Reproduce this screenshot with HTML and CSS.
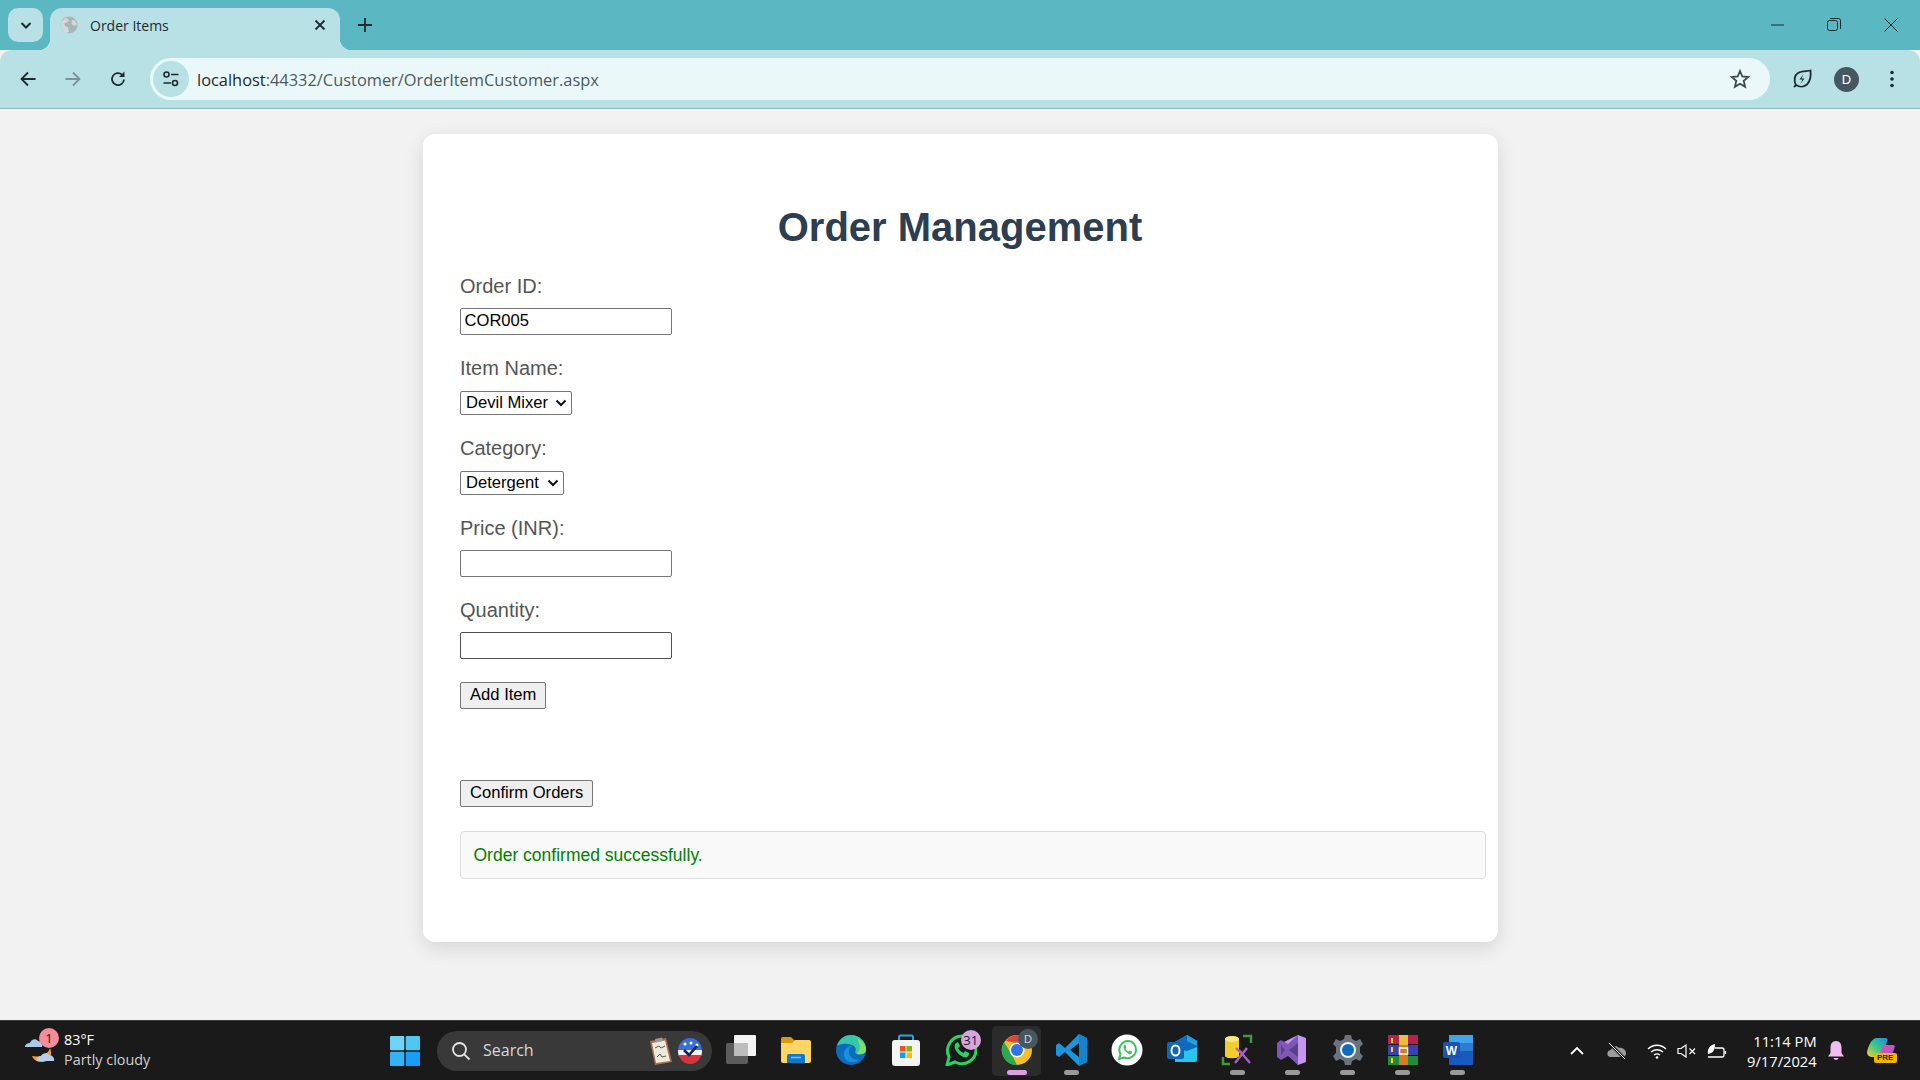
FILE: index.html
```html
<!DOCTYPE html>
<html lang="en">

<head>
    <meta charset="UTF-8">
    <title>Order Items</title>
    <link rel="stylesheet" href="styles.css">
</head>

<body>
    <div class="tabstrip">
        <div class="tab-search">
            <svg width="16" height="16" viewBox="0 0 16 16"><path d="M3.5 6 8 10.5 12.5 6" fill="none" stroke="#1f2a2c" stroke-width="2"/></svg>
        </div>
        <div class="tab">
            <svg class="favicon" width="18" height="18" viewBox="0 0 18 18"><circle cx="9" cy="9" r="8.5" fill="#a9b4b7"/><path d="M6 1.5 9 4 7.5 6.5 4.5 7 5 10l3 1 1 5-3 1C2 15 0 11 1 6ZM12 4l3 .5 2 4-3 1.500-2.500-2Z" fill="#cfd9dc"/></svg>
            <span class="tab-title">Order Items</span>
            <svg class="tab-close" width="12" height="12" viewBox="0 0 12 12"><path d="M1.500 1.500 10.500 10.500M10.500 1.500 1.500 10.500" stroke="#1f2a2c" stroke-width="1.800"/></svg>
        </div>
        <svg class="new-tab" width="14" height="14" viewBox="0 0 14 14"><path d="M7 0V14M0 7H14" stroke="#1f2a2c" stroke-width="1.800"/></svg>
        <div class="window-controls">
            <svg width="14" height="14" viewBox="0 0 14 14"><path d="M1 7H14" stroke="#1c2b2d" stroke-width="1"/></svg>
            <svg width="14" height="14" viewBox="0 0 14 14"><rect x="0.500" y="2.500" width="10" height="10" rx="2" fill="none" stroke="#1c2b2d"/><path d="M3 .5H11.500A2 2 0 0 1 13.500 2.500V11" fill="none" stroke="#1c2b2d"/></svg>
            <svg width="14" height="14" viewBox="0 0 14 14"><path d="M.5.5 13.500 13.500M13.500.5.5 13.500" stroke="#1c2b2d" stroke-width="1"/></svg>
        </div>
    </div>

    <div class="toolbar">
        <svg class="nav-btn" width="18" height="18" viewBox="0 0 18 18"><path d="M16.500 9H2.500M9 2.500 2.500 9 9 15.500" fill="none" stroke="#1f2a2c" stroke-width="1.800"/></svg>
        <svg class="nav-btn" width="18" height="18" viewBox="0 0 18 18"><path d="M1.500 9H15.500M9 2.500 15.500 9 9 15.500" fill="none" stroke="#7d9296" stroke-width="1.800"/></svg>
        <svg class="nav-btn" width="18" height="18" viewBox="0 0 18 18"><path d="M15 9.500A6 6 0 1 1 13 4.600" fill="none" stroke="#1f2a2c" stroke-width="1.800"/><path d="M15.500 1.500V7H10Z" fill="#1f2a2c"/></svg>
        <div class="omnibox">
            <div class="site-info">
                <svg width="18" height="18" viewBox="0 0 18 18"><circle cx="4.500" cy="4.500" r="2.500" fill="none" stroke="#1f2a2c" stroke-width="1.600"/><path d="M9 4.500H16.500M1.500 13H9" stroke="#1f2a2c" stroke-width="1.600"/><circle cx="13" cy="13" r="2.500" fill="none" stroke="#1f2a2c" stroke-width="1.600"/></svg>
            </div>
            <div class="url"><span class="host">localhost</span>:44332/Customer/OrderItemCustomer.aspx</div>
            <svg class="star" width="20" height="20" viewBox="0 0 20 20"><path d="M10 2 12.300 7.500 18.300 8 13.700 11.900 15.100 17.800 10 14.700 4.900 17.800 6.300 11.900 1.700 8 7.700 7.500Z" fill="none" stroke="#3c4a4d" stroke-width="1.800"/></svg>
        </div>
        <svg class="leaf" width="22" height="20" viewBox="0 0 20 20"><path d="M2 18 4 16C1.500 12 2.500 6 6 4 10 1.500 15 2.500 18.500 1.500 19 6 18.500 12 15 15.500 11.500 18.500 7 18 4 16" fill="none" stroke="#1f2a2c" stroke-width="1.800"/><path d="M11.500 5 7.500 10.500H10.500L8.500 15 12.500 9.500H9.500Z" fill="#1f2a2c"/></svg>
        <div class="avatar">D</div>
        <svg class="menu" width="4" height="18" viewBox="0 0 4 18"><circle cx="2" cy="2.500" r="1.800" fill="#1f2a2c"/><circle cx="2" cy="9" r="1.800" fill="#1f2a2c"/><circle cx="2" cy="15.500" r="1.800" fill="#1f2a2c"/></svg>
    </div>

    <main class="page">
        <div class="card">
            <h1>Order Management</h1>
            <div class="field">
                <label>Order ID:</label>
                <input class="text-input" type="text" value="COR005">
            </div>
            <div class="field">
                <label>Item Name:</label>
                <select class="drop drop-item"><option>Devil Mixer</option></select>
            </div>
            <div class="field">
                <label>Category:</label>
                <select class="drop drop-category"><option>Detergent</option></select>
            </div>
            <div class="field">
                <label>Price (INR):</label>
                <input class="text-input" type="text">
            </div>
            <div class="field">
                <label>Quantity:</label>
                <input class="text-input hovered" type="text">
            </div>
            <button class="btn btn-add">Add Item</button>
            <button class="btn btn-confirm">Confirm Orders</button>
            <div class="status">Order confirmed successfully.</div>
        </div>
    </main>

    <div class="taskbar">
        <div class="weather">
            <svg width="32" height="34" viewBox="0 0 32 34"><path d="M8 22C10 28 19 30 24 26 27 23 28 19 26 14 25 19 18 24 8 22Z" fill="#f0a030"/><path d="M1 13C1 10 4 9 6 9 7 5 12 4 14 7 17 7 19 10 18 13Z" fill="#a9c9ee"/><path d="M13 27C12 24 15 22 17 22 18 19 23 18 25 21 28 21 31 24 30 27Z" fill="#b3d0f2"/></svg>
            <span class="weather-badge">1</span>
            <div class="weather-text">
                <div class="temp">83°F</div>
                <div class="sky">Partly cloudy</div>
            </div>
        </div>

        <div class="start">
            <svg width="30" height="30" viewBox="0 0 30 30"><rect x="0" y="0" width="14.300" height="14.300" rx="1" fill="#6fd3f5"/><rect x="15.700" y="0" width="14.300" height="14.300" rx="1" fill="#52c6f3"/><rect x="0" y="15.700" width="14.300" height="14.300" rx="1" fill="#35b2f5"/><rect x="15.700" y="15.700" width="14.300" height="14.300" rx="1" fill="#1a9df5"/></svg>
        </div>

        <div class="search">
            <svg width="20" height="20" viewBox="0 0 20 20"><circle cx="8.500" cy="8.500" r="6.500" fill="none" stroke="#e6e6e6" stroke-width="1.800"/><path d="M13.300 13.300 18.500 18.500" stroke="#e6e6e6" stroke-width="1.800"/></svg>
            <span class="search-text">Search</span>
            <svg class="search-art" width="26" height="30" viewBox="0 0 26 30"><path d="M3 5 19 2 25 26 8 29Z" fill="#a9704f"/><path d="M5 7 18 4.500 23 25 9 27Z" fill="#efe9dc"/><path d="M8 3 15 1.500 16 5 9 6.500Z" fill="#9a9a9a"/><path d="M8 12 12 10 14 12 18 10M10 21 13 18 15 21 19 20" fill="none" stroke="#555" stroke-width="1"/></svg>
            <svg class="search-art search-vote" width="26" height="26" viewBox="0 0 26 26"><defs><clipPath id="vote"><ellipse cx="13" cy="13" rx="12" ry="13"/></clipPath></defs><g clip-path="url(#vote)"><rect width="26" height="12" fill="#3b6fd8"/><rect y="12" width="26" height="6" fill="#f2f2f2"/><rect y="17" width="26" height="9" fill="#d8343e"/><circle cx="8" cy="6" r="1.500" fill="#fff"/><circle cx="14" cy="5" r="1.500" fill="#fff"/><circle cx="20" cy="7" r="1.500" fill="#fff"/></g><path d="M7 12 12 17 20 8" fill="none" stroke="#1b2550" stroke-width="2.600"/></svg>
        </div>

        <div class="apps">
            <div class="app">
                <svg width="32" height="32" viewBox="0 0 32 32"><rect x="1" y="9" width="22" height="21" rx="2" fill="#5c5c5c"/><rect x="9" y="1" width="22" height="21" rx="1" fill="#f4f4f4"/><rect x="9" y="9" width="14" height="13" fill="#bdbdbd"/></svg>
            </div>
            <div class="app">
                <svg width="32" height="32" viewBox="0 0 32 32"><path d="M1 5A2 2 0 0 1 3 3H11L15 7V28H3A2 2 0 0 1 1 26Z" fill="#d99a10"/><path d="M1 9 12 9 15 6H29A2 2 0 0 1 31 8V27A2 2 0 0 1 29 29H3A2 2 0 0 1 1 27Z" fill="#fdd564"/><path d="M7 22A2 2 0 0 1 9 20H23A2 2 0 0 1 25 22V29H7Z" fill="#0f78c8"/><path d="M11 23.500H21" stroke="#7cc4f2" stroke-width="1.500"/></svg>
            </div>
            <div class="app">
                <svg width="32" height="32" viewBox="0 0 32 32"><circle cx="16" cy="16" r="15" fill="#0c6bbd"/><path d="M2 12C4 4 11 1 16 1 25 1 31 8 31 15 31 20 26 21 22 20 18 19 23 15 19 12 14 9 6 9 2 12Z" fill="#37c6a8"/><path d="M22 4C28 7 31 11 31 15 31 20 26 21 22 20 24 17 27 14 22 4Z" fill="#7ce06a"/><path d="M24 26C19 30 11 29 9 22 8 17 12 12 17 12 13 15 13 20 16 23 18 25 21 26 24 26Z" fill="#1891dd"/></svg>
            </div>
            <div class="app">
                <svg width="32" height="32" viewBox="0 0 32 32"><path d="M9 7V3A1.500 1.500 0 0 1 10.500 1.500H21.500A1.500 1.500 0 0 1 23 3V7" fill="none" stroke="#2aa3df" stroke-width="2"/><rect x="2" y="6" width="28" height="26" rx="3" fill="#f3f3f3"/><rect x="10" y="12" width="5.500" height="5.500" fill="#f25022"/><rect x="16.500" y="12" width="5.500" height="5.500" fill="#7fba00"/><rect x="10" y="18.500" width="5.500" height="5.500" fill="#00a4ef"/><rect x="16.500" y="18.500" width="5.500" height="5.500" fill="#ffb900"/></svg>
            </div>
            <div class="app">
                <svg width="32" height="32" viewBox="0 0 32 32"><path d="M2 31 4 23C-1 13 7 2 17 2 26 2 31 9 31 16 31 26 20 33 10 28Z" fill="none" stroke="#25d366" stroke-width="3"/><path d="M11 9C9 11 9 14 12 18 15 22 19 24 22 23 24 22 24 20 24 19L20 17 18.500 19C16 18 14 16 13 14L15 12 13 8Z" fill="#25d366"/></svg>
                <span class="app-badge">31</span>
            </div>
            <div class="app app-active">
                <svg width="32" height="32" viewBox="0 0 32 32"><circle cx="16" cy="16" r="15" fill="#f6bf26"/><path d="M16 1A15 15 0 0 1 29 8.500L16 9 5 7A15 15 0 0 1 16 1Z" fill="#dc4437"/><path d="M3 8 10 19 16 31A15 15 0 0 1 3 8Z" fill="#2fa853"/><circle cx="16" cy="16" r="7.500" fill="#fff"/><circle cx="16" cy="16" r="6" fill="#2f74e8"/></svg>
                <span class="chrome-badge">D</span>
                <span class="pill"></span>
            </div>
            <div class="app">
                <svg width="32" height="32" viewBox="0 0 32 32"><path d="M23 0 31 4V28L23 32 9 18 3 23 0 21V11L3 9 9 14ZM23 9 14 16 23 23Z" fill="#1c95dd"/><path d="M23 0 31 4V28L23 32Z" fill="#0e7dc7" opacity="0.700"/></svg>
                <span class="dot"></span>
            </div>
            <div class="app">
                <svg width="32" height="32" viewBox="0 0 32 32"><circle cx="16" cy="16" r="15.500" fill="#fff"/><path d="M8 25 9.500 20C6 14 11 7 17 7 22 7 25 11 25 16 25 22 18 26 13 23.500Z" fill="none" stroke="#3cc45c" stroke-width="2"/><path d="M13 11C12 13 12.500 15 14 17 16 19.500 18.500 20.500 20 20 21 19 21 18 21 17.500L18.500 16.500 17.500 17.500C16 17 15 16 14.500 14.500L15.500 13.500 14.500 11Z" fill="#3cc45c"/></svg>
            </div>
            <div class="app">
                <svg width="32" height="32" viewBox="0 0 32 32"><path d="M9 8 21 1 31 7V26A2 2 0 0 1 29 28H9Z" fill="#29c5ee"/><path d="M9 8 21 1 31 7 31 13 21 17 9 15Z" fill="#0f6cbd"/><path d="M21 1 31 7V12L21 7Z" fill="#2b9be0"/><rect x="1" y="8" width="17" height="17" rx="2" fill="#0f67b8"/><ellipse cx="9.500" cy="16.500" rx="4" ry="5" fill="none" stroke="#fff" stroke-width="2"/></svg>
            </div>
            <div class="app">
                <svg width="32" height="32" viewBox="0 0 32 32"><path d="M22 2H30V9M2 23V30H9" fill="none" stroke="#3b9b3a" stroke-width="2.500"/><path d="M4 5C4 1 18 1 18 5V22C18 25 4 25 4 22Z" fill="#f3cc30"/><ellipse cx="11" cy="5" rx="7" ry="3" fill="#f8e48a"/><path d="M14 29 26 14M29 29 18 16M15 14 20 19" fill="none" stroke="#a75fc9" stroke-width="2.400"/></svg>
                <span class="dot"></span>
            </div>
            <div class="app">
                <svg width="32" height="32" viewBox="0 0 32 32"><path d="M22 1 30 4V28L22 31 4 10Z" fill="#c596ee"/><path d="M22 1V31L12 22 5 26 1 23V9L5 6 12 10Z" fill="#7e57b8"/><path d="M22 9 13 16 22 23ZM5 11V21L9 16Z" fill="#1b1b1b" opacity="0.350"/></svg>
                <span class="dot"></span>
            </div>
            <div class="app">
                <svg width="32" height="32" viewBox="0 0 32 32"><path d="M13 1H19L20 5 24 7 28 5 31 10 28 13V19L31 22 28 27 24 25 20 27 19 31H13L12 27 8 25 4 27 1 22 4 19V13L1 10 4 5 8 7 12 5Z" fill="#68757f"/><circle cx="16" cy="16" r="8" fill="#eef2f5"/><circle cx="16" cy="16" r="6" fill="#0f6cbd"/></svg>
                <span class="dot"></span>
            </div>
            <div class="app">
                <svg width="32" height="32" viewBox="0 0 32 32"><rect x="1" y="1" width="30" height="9" fill="#b5224e"/><rect x="1" y="11" width="30" height="10" fill="#3f3fae"/><rect x="1" y="22" width="30" height="9" fill="#1e8c3a"/><rect x="12" y="1" width="9" height="30" fill="#d97b1a"/><rect x="12" y="1" width="9" height="10" fill="#e8c040"/><rect x="4" y="4" width="2" height="5" fill="#f5d030"/><rect x="4" y="13" width="2" height="5" fill="#f5d030"/><rect x="4" y="24" width="2" height="5" fill="#f5d030"/><rect x="12.500" y="14" width="8" height="6" fill="none" stroke="#fff" stroke-width="1.500"/></svg>
                <span class="dot"></span>
            </div>
            <div class="app">
                <svg width="32" height="32" viewBox="0 0 32 32"><path d="M8 1H30A1 1 0 0 1 31 2V30A1 1 0 0 1 30 31H8A1 1 0 0 1 7 30V2A1 1 0 0 1 8 1Z" fill="#185abd"/><rect x="7" y="1" width="24" height="8" fill="#41a5ee"/><rect x="7" y="9" width="24" height="8" fill="#2b7cd3"/><rect x="1" y="8" width="17" height="16" rx="2" fill="#1854b0"/><text class="word-w" x="9.500" y="20.500" text-anchor="middle">W</text></svg>
                <span class="dot"></span>
            </div>
        </div>

        <div class="tray">
            <svg class="tray-chevron" width="14" height="8" viewBox="0 0 14 8"><path d="M1 7 7 1 13 7" fill="none" stroke="#fff" stroke-width="1.800"/></svg>
            <svg class="tray-cloud" width="20" height="18" viewBox="0 0 20 18"><path d="M1 14C-.5 11 1 8 4 8 5 4 10 3 12 6 15 5 19 8 19 11 19 14 17 15 15 15H3Z" fill="#9b9b9b"/><path d="M2 1 18 17" stroke="#1a1a1a" stroke-width="3"/><path d="M2 1 18 17" stroke="#fff" stroke-width="1"/></svg>
            <svg class="tray-wifi" width="20" height="16" viewBox="0 0 20 16"><path d="M1 6C6 1 14 1 19 6M4 9C8 6 12 6 16 9M7 12C9 10.500 11 10.500 13 12" fill="none" stroke="#fff" stroke-width="1.400"/><circle cx="10" cy="14.500" r="1.300" fill="#fff"/></svg>
            <svg class="tray-sound" width="20" height="14" viewBox="0 0 20 14"><path d="M1 4.500H4L9 1V13L4 9.500H1Z" fill="none" stroke="#fff" stroke-width="1.200"/><path d="M12.500 4.500 18 10M18 4.500 12.500 10" stroke="#fff" stroke-width="1.200"/></svg>
            <svg class="tray-battery" width="20" height="16" viewBox="0 0 20 16"><path d="M1 14H15A2 2 0 0 0 17 12V7A2 2 0 0 0 15 5H8" fill="none" stroke="#fff" stroke-width="1.300"/><path d="M18.500 8V11" stroke="#fff" stroke-width="1.300"/><path d="M1 11C0 6 3 2 8 1 8 6 7 10 1 11Z" fill="#fff"/></svg>
            <div class="clock">
                <div>11:14 PM</div>
                <div>9/17/2024</div>
            </div>
            <svg class="tray-bell" width="16" height="20" viewBox="0 0 16 20"><path d="M8 0C12 0 13.500 3 13.500 7V12L16 15.500H0L2.500 12V7C2.500 3 4 0 8 0Z" fill="#efbdf0"/><path d="M5.500 17H10.500C10 19.500 6 19.500 5.500 17Z" fill="#efbdf0"/></svg>
            <div class="copilot">
                <svg width="28" height="24" viewBox="0 0 28 24"><defs><linearGradient id="cop1" x1="0" y1="1" x2="1" y2="0"><stop offset="0" stop-color="#f2d43a"/><stop offset="0.500" stop-color="#38c68c"/><stop offset="1" stop-color="#1c8ae8"/></linearGradient><linearGradient id="cop2" x1="0" y1="0" x2="1" y2="1"><stop offset="0" stop-color="#e64fa8"/><stop offset="1" stop-color="#9a5ae8"/></linearGradient></defs><path d="M9 1H19C20 1 21 2 20.500 3L15 20H6C2 20 0 18 0 15 1 10 4 2 9 1Z" fill="url(#cop1)"/><path d="M16 8H26C28 8 28 10 27.500 11L24 20C23 23 21 23 19 23H10L16 8Z" fill="url(#cop2)"/></svg>
                <span class="pre">PRE</span>
            </div>
        </div>
    </div>
</body>

</html>
```

FILE: styles.css
```css
* {
    box-sizing: border-box;
}

html, body {
    height: 100%;
}

body {
    margin: 0px;
    display: flex;
    flex-direction: column;
    height: 1080px;
    overflow: hidden;
    background-color: #f2f2f2;
    font-family: "Liberation Sans", Arial, sans-serif;
}

/* browser chrome */

.tabstrip {
    display: flex;
    align-items: flex-end;
    flex: none;
    height: 50px;
    padding-left: 8px;
    background-color: #5bb8c2;
}

.tab-search {
    display: flex;
    align-items: center;
    justify-content: center;
    width: 35px;
    height: 34px;
    margin-bottom: 8px;
    border-radius: 10px;
    background-color: #b8e1e6;
}

.tab {
    position: relative;
    display: flex;
    align-items: center;
    width: 290px;
    height: 42px;
    margin-left: 7px;
    padding: 0px 14px 8px 10px;
    border-radius: 12px 12px 0px 0px;
    background-color: #b8e1e6;
}

.tab::before, .tab::after {
    content: "";
    position: absolute;
    bottom: 0px;
    width: 12px;
    height: 12px;
}

.tab::before {
    left: -12px;
    background: radial-gradient(circle at 0 0, transparent 12px, #b8e1e6 12.5px);
}

.tab::after {
    right: -12px;
    background: radial-gradient(circle at 100% 0, transparent 12px, #b8e1e6 12.5px);
}

.tab-title {
    flex: 1;
    margin-left: 12px;
    color: #1f2a2c;
    font-family: "Open Sans", sans-serif;
    font-size: 14px;
}

.new-tab {
    margin: 0px 0px 18px 18px;
}

.window-controls {
    display: flex;
    gap: 43px;
    margin: 0px 22px 18px auto;
}

.toolbar {
    display: flex;
    align-items: center;
    flex: none;
    height: 59px;
    padding-left: 19px;
    border-radius: 12px 12px 0px 0px;
    border-bottom: 1px solid #94b4ba;
    background-color: #b8e1e6;
}

.nav-btn {
    margin-right: 27px;
}

.nav-btn:nth-child(3) {
    margin-right: 23px;
}

.omnibox {
    display: flex;
    align-items: center;
    width: 1620px;
    height: 42px;
    padding: 0px 20px 0px 3px;
    border-radius: 21px;
    background-color: #ebf8f9;
}

.site-info {
    display: flex;
    align-items: center;
    justify-content: center;
    width: 36px;
    height: 36px;
    border-radius: 50%;
    background-color: #b8e1e6;
}

.url {
    flex: 1;
    margin-left: 8px;
    color: #4a5a5e;
    font-family: "Open Sans", sans-serif;
    font-size: 16.4px;
}

.url .host {
    color: #1f2a2c;
}

.leaf {
    margin-left: 21px;
}

.avatar {
    width: 25px;
    height: 25px;
    margin-left: 21px;
    border-radius: 50%;
    background-color: #47575f;
    color: #fff;
    text-align: center;
    line-height: 25px;
    font-size: 13px;
}

.menu {
    margin-left: 31px;
}

/* the page itself */

.page {
    flex: 1;
    padding-top: 25px;
}

.card {
    width: 1075px;
    height: 808px;
    margin: 0px auto;
    padding: 37px 37.5px;
    border-radius: 12px;
    background-color: #fff;
    box-shadow: 0px 6px 20px rgba(0, 0, 0, 0.12);
}

h1 {
    margin: 33px 0px 25px;
    text-align: center;
    color: #2c3e50;
    font-size: 40px;
    line-height: 46px;
}

.field {
    margin-bottom: 22.5px;
}

.field label {
    display: block;
    margin-bottom: 10px;
    color: #555;
    font-size: 20px;
    line-height: 23px;
}

.text-input {
    display: block;
    width: 212px;
    height: 26.5px;
    padding: 1px 3.5px;
    border: 1px solid #767676;
    border-radius: 2px;
    color: #000;
    font-family: "Liberation Sans", Arial, sans-serif;
    font-size: 16.6px;
}

.text-input.hovered {
    border-color: #4f4f4f;
}

/* own arrow, the native one is too thin here */
.drop {
    display: block;
    height: 23.5px;
    margin-top: 11px;
    padding: 0px 0px 0px 5px;
    border: 1px solid #767676;
    border-radius: 2px;
    appearance: none;
    background: #fff url("data:image/svg+xml,%3Csvg xmlns='http://www.w3.org/2000/svg' width='12' height='8'%3E%3Cpath d='M1.500 1.500 6 6 10.500 1.500' fill='none' stroke='%23111' stroke-width='2'/%3E%3C/svg%3E") no-repeat right 4px center;
    color: #000;
    font-family: "Liberation Sans", Arial, sans-serif;
    font-size: 16.6px;
}

.drop-item {
    width: 112px;
}

.drop-category {
    width: 104px;
}

.btn {
    display: block;
    height: 26.5px;
    padding: 0px 9px;
    border: 1px solid #767676;
    border-radius: 2px;
    background-color: #efefef;
    color: #000;
    font-family: "Liberation Sans", Arial, sans-serif;
    font-size: 16.6px;
}

.btn-add {
    margin-top: 23.5px;
}

.btn-confirm {
    margin-top: 71.5px;
}

.status {
    width: 1026px;
    height: 48px;
    margin-top: 24.5px;
    padding: 0px 12.5px;
    border: 1px solid #ddd;
    border-radius: 4px;
    background-color: #f9f9f9;
    color: #008000;
    font-size: 17.5px;
    line-height: 46px;
}

/* windows taskbar */

.taskbar {
    display: flex;
    align-items: center;
    flex: none;
    height: 60px;
    border-top: 1px solid #3a3a3a;
    background-color: #1a1a1a;
    color: #fff;
}

.weather {
    position: relative;
    display: flex;
    align-items: center;
    width: 378px;
    padding-left: 24px;
}

.weather-badge {
    position: absolute;
    left: 39px;
    top: -4px;
    width: 20px;
    height: 20px;
    border-radius: 50%;
    background-color: #f48c9a;
    color: #1a1a1a;
    text-align: center;
    line-height: 20px;
    font-family: "Open Sans", sans-serif;
    font-size: 13px;
}

.weather-text {
    margin: -2px 0px 0px 8px;
    font-family: "Open Sans", sans-serif;
    font-size: 14.4px;
    line-height: 20px;
}

.sky {
    color: #d0d0d0;
}

.start {
    display: flex;
    align-items: center;
    justify-content: center;
    width: 53px;
}

.search {
    display: flex;
    align-items: center;
    width: 275px;
    height: 40px;
    margin-left: 6px;
    padding: 0px 9px 0px 14px;
    border-radius: 20px;
    background-color: #393939;
}

.search-text {
    flex: 1;
    margin: -2px 0px 0px 12px;
    color: #d8d8d8;
    font-family: "Open Sans", sans-serif;
    font-size: 16px;
}

.search-art {
    margin-left: 0px;
}

.search-vote {
    margin-left: 4px;
}

.apps {
    position: relative;
    z-index: 0;
    display: flex;
    margin-left: 1px;
}

.app {
    position: relative;
    display: flex;
    align-items: center;
    justify-content: center;
    width: 55.2px;
    height: 50px;
    padding-bottom: 2px;
}

.app-active::before {
    content: "";
    position: absolute;
    z-index: -1;
    top: 0px;
    bottom: 0px;
    left: 3px;
    right: 3px;
    border-radius: 5px;
    background-color: #2b2b2b;
}

.dot {
    position: absolute;
    bottom: 1px;
    left: 20px;
    width: 15px;
    height: 5px;
    border-radius: 3px;
    background-color: #9a9a9a;
}

.pill {
    position: absolute;
    bottom: 1px;
    left: 18px;
    width: 20px;
    height: 5px;
    border-radius: 3px;
    background-color: #dba0e0;
}

.app-badge {
    position: absolute;
    top: 4px;
    left: 27px;
    width: 20px;
    height: 20px;
    border-radius: 50%;
    background-color: #d6a4e0;
    color: #1a1a1a;
    text-align: center;
    line-height: 20px;
    font-family: "Open Sans", sans-serif;
    font-size: 13px;
}

.chrome-badge {
    position: absolute;
    top: 3.5px;
    left: 29px;
    width: 20px;
    height: 20px;
    border-radius: 50%;
    background-color: #47575f;
    color: #cfd5d8;
    text-align: center;
    line-height: 20px;
    font-size: 11px;
}

.word-w {
    fill: #fff;
    font-family: "Liberation Sans", sans-serif;
    font-size: 12px;
    font-weight: bold;
}

.tray {
    display: flex;
    align-items: center;
    margin-left: 84px;
}

.tray-cloud {
    margin-left: 23px;
}

.tray-wifi {
    margin-left: 20px;
}

.tray-sound {
    margin-left: 10px;
}

.tray-battery {
    margin-left: 10px;
}

.clock {
    width: 90px;
    text-align: right;
    font-family: "Open Sans", sans-serif;
    font-size: 14.7px;
    line-height: 20px;
}

.tray-bell {
    margin-left: 11px;
}

.copilot {
    position: relative;
    margin-left: 23px;
}

.pre {
    position: absolute;
    left: 7px;
    top: 16px;
    width: 23px;
    height: 10px;
    border-radius: 2px;
    background-color: #f5b400;
    color: #1a1a1a;
    text-align: center;
    line-height: 10px;
    font-size: 8px;
    font-weight: bold;
}
```
